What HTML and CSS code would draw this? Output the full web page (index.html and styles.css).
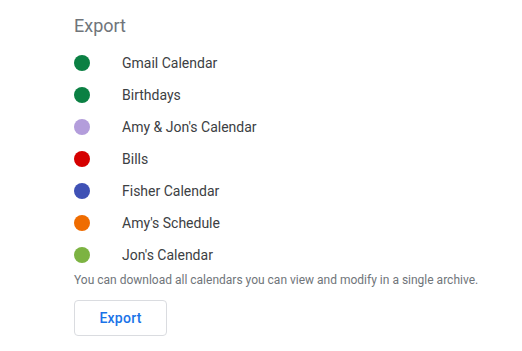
FILE: index.html
```html
<!DOCTYPE html>
<html>
<head>
    <title>Export</title>
    <link rel="stylesheet" href="styles.css">
</head>
<body>
    <div class="section">
        <h2 class="section-title">Export</h2>
        <ul class="calendar-list">
            <li class="calendar-item"><span class="dot dot-gmail"></span>Gmail Calendar</li>
            <li class="calendar-item"><span class="dot dot-birthdays"></span>Birthdays</li>
            <li class="calendar-item"><span class="dot dot-amy-jon"></span>Amy &amp; Jon's Calendar</li>
            <li class="calendar-item"><span class="dot dot-bills"></span>Bills</li>
            <li class="calendar-item"><span class="dot dot-fisher"></span>Fisher Calendar</li>
            <li class="calendar-item"><span class="dot dot-amy"></span>Amy's Schedule</li>
            <li class="calendar-item"><span class="dot dot-jon"></span>Jon's Calendar</li>
        </ul>
        <p class="help-text">You can download all calendars you can view and modify in a single archive.</p>
        <button class="export-button">Export</button>
    </div>
</body>
</html>
```

FILE: styles.css
```css
body {
    font-family: Roboto, Arial, sans-serif;
    background-color: #fff;
    margin: 0;
    padding: 0;
}

.section {
    padding: 14px 0 0 74px;
}

.section-title {
    font-size: 18px;
    font-weight: 400;
    line-height: 24px;
    color: #70757a;
    margin: 0 0 9px;
}

.calendar-list {
    list-style: none;
    margin: 0;
    padding: 0;
}

.calendar-item {
    display: flex;
    align-items: center;
    gap: 32px;
    height: 32px;
    font-size: 14px;
    color: #3c4043;
}

.dot {
    width: 16px;
    height: 16px;
    border-radius: 50%;
    flex-shrink: 0;
}

.dot-gmail { background-color: #0b8043; }
.dot-birthdays { background-color: #0b8043; }
.dot-amy-jon { background-color: #b39ddb; }
.dot-bills { background-color: #d50000; }
.dot-fisher { background-color: #3f51b5; }
.dot-amy { background-color: #ef6c00; }
.dot-jon { background-color: #7cb342; }

.help-text {
    font-size: 12px;
    line-height: 16px;
    color: #70757a;
    margin: 1px 0 12px;
}

.export-button {
    font-family: Roboto, Arial, sans-serif;
    font-size: 14px;
    font-weight: 500;
    letter-spacing: 0.25px;
    color: #1a73e8;
    background-color: #fff;
    border: 1px solid #dadce0;
    border-radius: 4px;
    width: 93px;
    height: 36px;
    padding: 0;
}
```
